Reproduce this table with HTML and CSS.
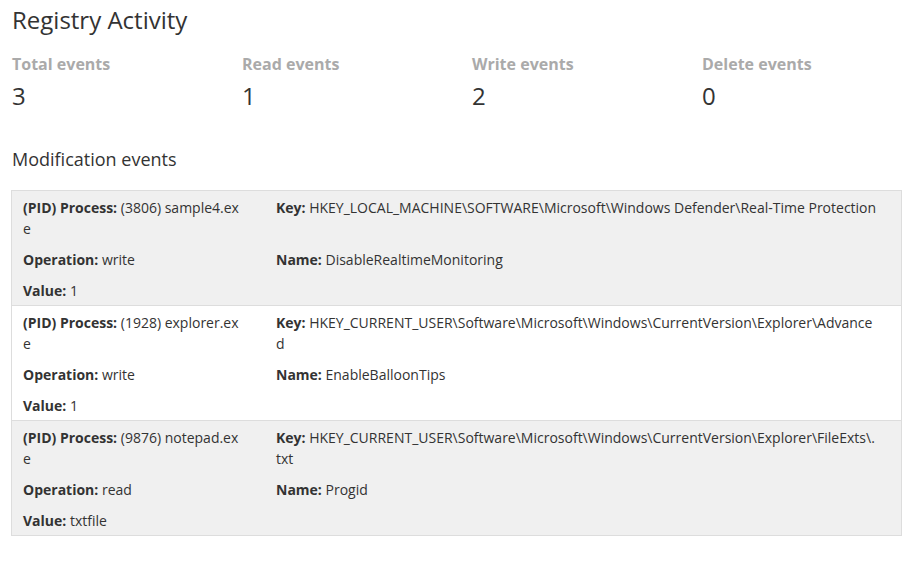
FILE: index.html
```html
<!DOCTYPE html>
<html>
<head>
    <title>Registry Activity</title>
    <link rel="stylesheet" href="styles.css">
</head>
<body>
    <div class="page">
        <h2 class="title">Registry Activity</h2>

        <!-- Summary counters -->
        <div class="stats">
            <div class="stat">
                <div class="stat-label">Total events</div>
                <div class="stat-value">3</div>
            </div>
            <div class="stat">
                <div class="stat-label">Read events</div>
                <div class="stat-value">1</div>
            </div>
            <div class="stat">
                <div class="stat-label">Write events</div>
                <div class="stat-value">2</div>
            </div>
            <div class="stat">
                <div class="stat-label">Delete events</div>
                <div class="stat-value">0</div>
            </div>
        </div>

        <h3 class="subtitle">Modification events</h3>

        <!-- Event list -->
        <div class="events">
            <div class="event">
                <div class="field"><b>(PID) Process:</b> (3806) sample4.exe</div>
                <div class="field"><b>Key:</b> HKEY_LOCAL_MACHINE\SOFTWARE\Microsoft\Windows Defender\Real-Time Protection</div>
                <div class="field"><b>Operation:</b> write</div>
                <div class="field"><b>Name:</b> DisableRealtimeMonitoring</div>
                <div class="field"><b>Value:</b> 1</div>
            </div>
            <div class="event">
                <div class="field"><b>(PID) Process:</b> (1928) explorer.exe</div>
                <div class="field"><b>Key:</b> HKEY_CURRENT_USER\Software\Microsoft\Windows\CurrentVersion\Explorer\Advanced</div>
                <div class="field"><b>Operation:</b> write</div>
                <div class="field"><b>Name:</b> EnableBalloonTips</div>
                <div class="field"><b>Value:</b> 1</div>
            </div>
            <div class="event">
                <div class="field"><b>(PID) Process:</b> (9876) notepad.exe</div>
                <div class="field"><b>Key:</b> HKEY_CURRENT_USER\Software\Microsoft\Windows\CurrentVersion\Explorer\FileExts\.txt</div>
                <div class="field"><b>Operation:</b> read</div>
                <div class="field"><b>Name:</b> Progid</div>
                <div class="field"><b>Value:</b> txtfile</div>
            </div>
        </div>
    </div>
</body>
</html>
```

FILE: styles.css
```css
/* Base */
body {
    margin: 0;
    font-family: "Open Sans", "Liberation Sans", sans-serif;
    color: #333;
    background: #fff;
}

.page {
    padding: 6px 11px 0 11px;
}

.title {
    margin: 0;
    font-size: 24px;
    font-weight: 400;
    line-height: 28px;
    padding-left: 1px;
}

/* Summary counters */
.stats {
    display: grid;
    grid-template-columns: repeat(4, 230px);
    margin-top: 20px;
    padding-left: 1px;
}

.stat-label {
    font-size: 16px;
    font-weight: 700;
    line-height: 20px;
    color: #aaa;
}

.stat-value {
    margin-top: 7px;
    font-size: 24px;
    line-height: 30px;
}

.subtitle {
    margin: 36px 0 0 1px;
    font-size: 18px;
    font-weight: 400;
    line-height: 24px;
}

/* Event list */
.events {
    margin-top: 19px;
    border: 1px solid #ddd;
}

.event {
    display: grid;
    grid-template-columns: 218px 602px;
    column-gap: 35px;
    row-gap: 10px;
    padding: 6px 12px 4px 11px;
    font-size: 14px;
    line-height: 21px;
    background: #f0f0f0;
}

.event + .event {
    border-top: 1px solid #ddd;
}

.event:nth-child(even) {
    background: #fff;
}

.field {
    word-break: break-all;
}
```
